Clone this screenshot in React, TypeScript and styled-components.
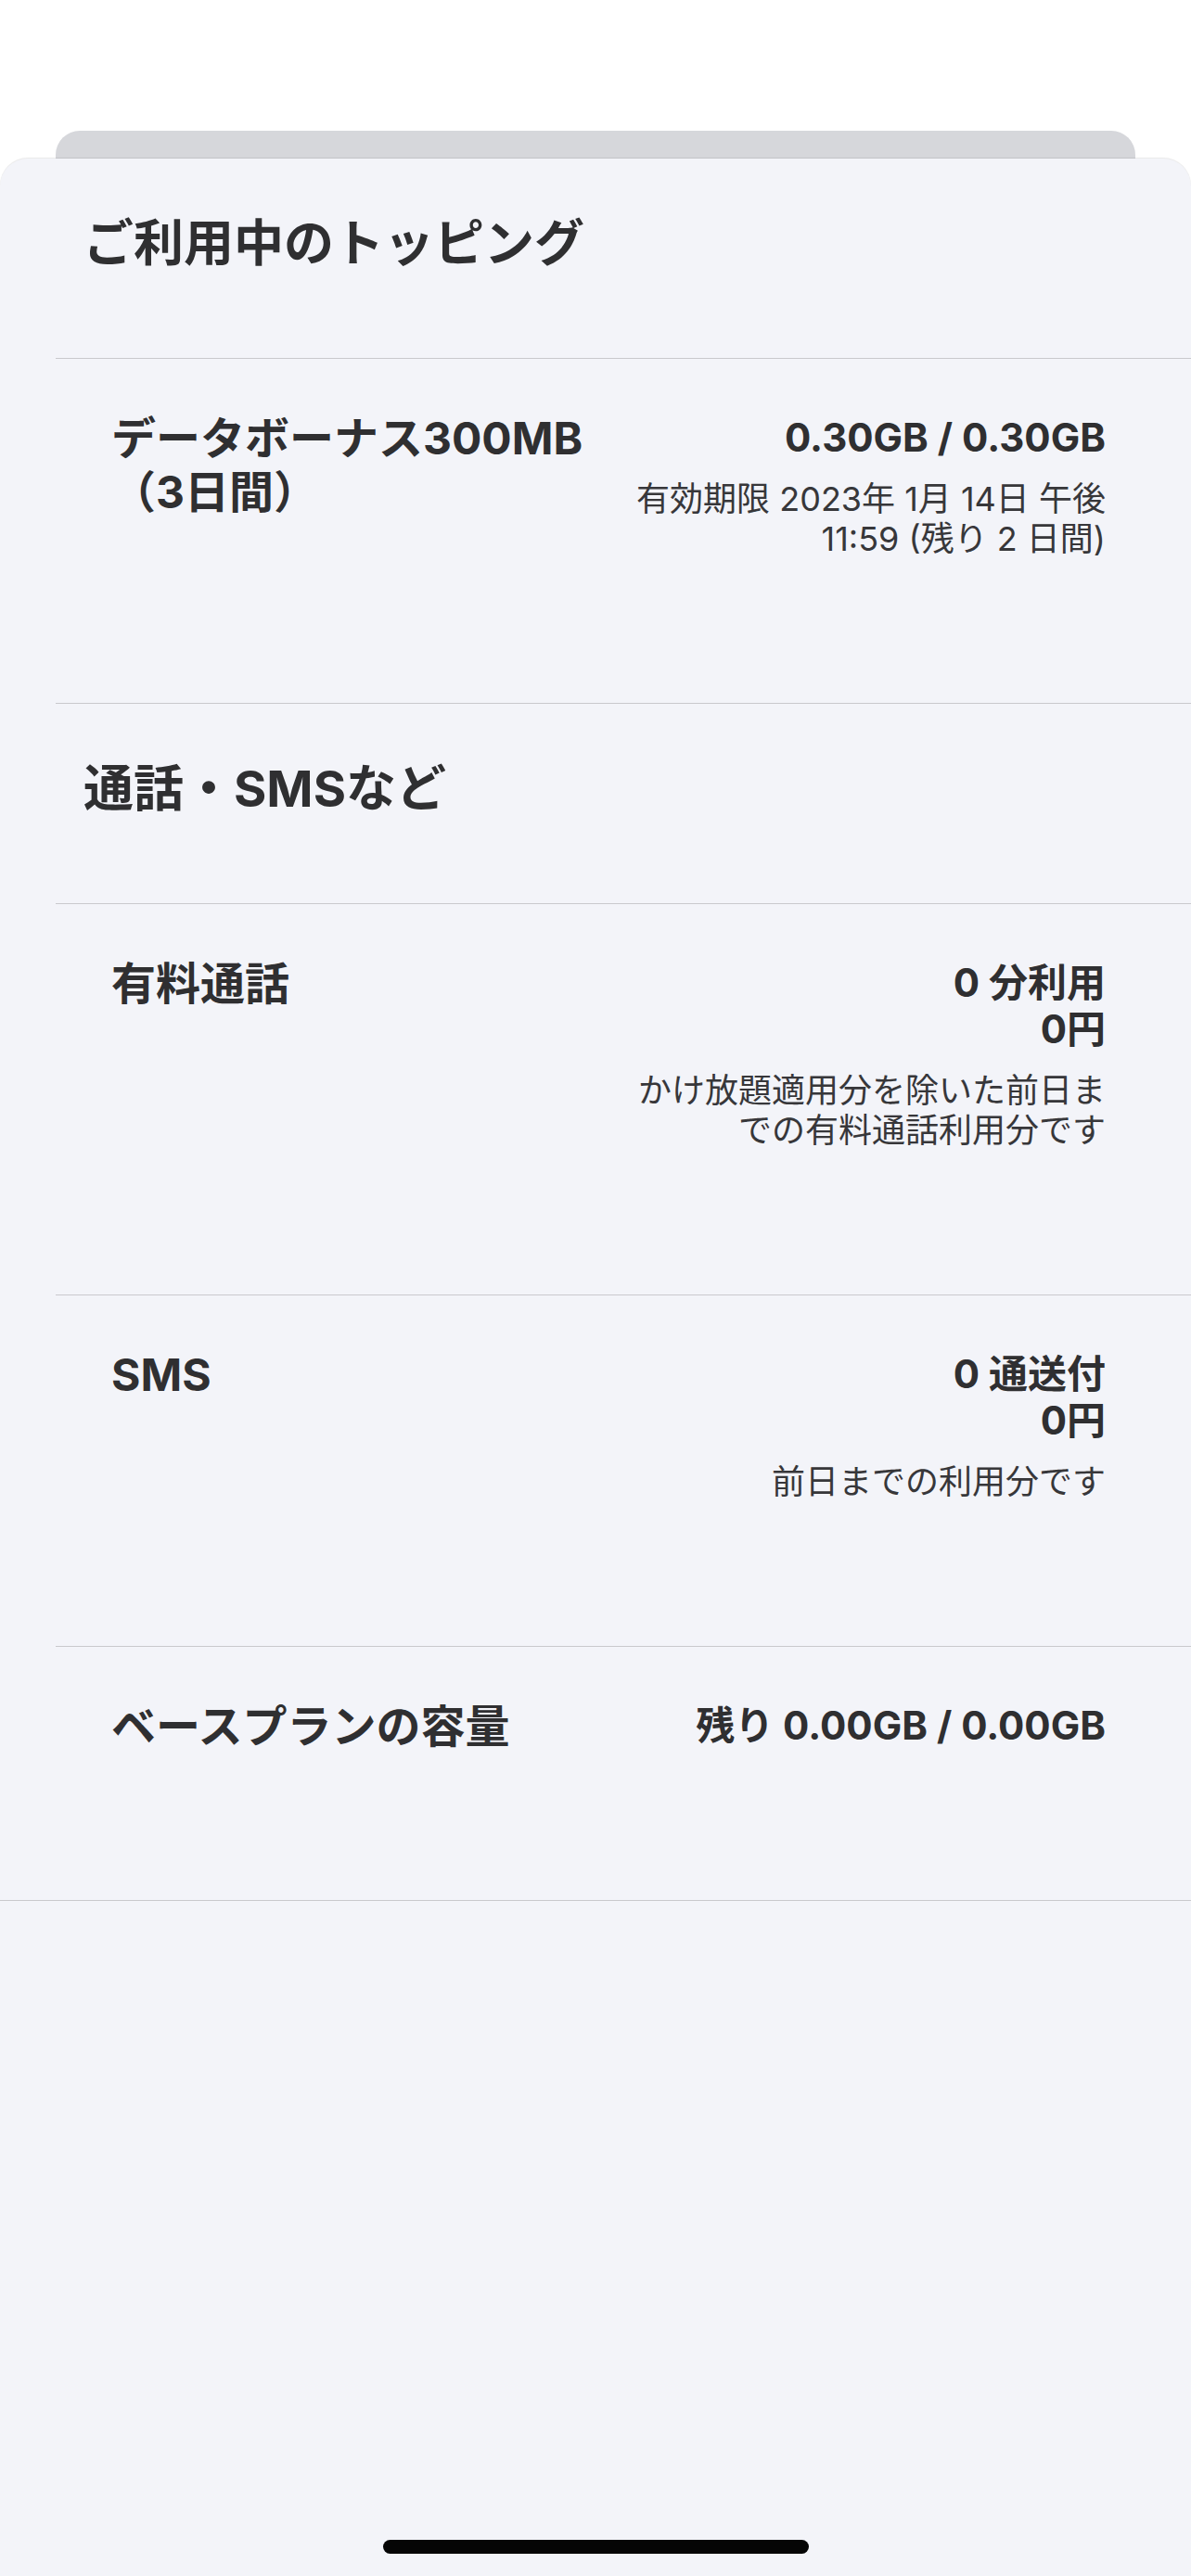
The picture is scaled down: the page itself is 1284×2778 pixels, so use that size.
import React from "react";
import styled, { createGlobalStyle } from "styled-components";

const GlobalStyle = createGlobalStyle`
  html, body {
    margin: 0;
    padding: 0;
    background: #ffffff;
  }
  body {
    font-family: Inter, "Noto Sans CJK JP", "Noto Sans", sans-serif;
    color: #2e2e30;
    -webkit-font-smoothing: antialiased;
  }
  * { box-sizing: border-box; }
`;

const Screen = styled.div`
  width: 1284px;
  min-height: 2778px;
  padding-top: 141px;
  display: flex;
  flex-direction: column;
  background: #ffffff;
`;

const BackTab = styled.div`
  height: 30px;
  margin: 0 60px;
  background: #d6d7db;
  border-radius: 26px 26px 0 0;
`;

const Sheet = styled.div`
  flex: 1;
  display: flex;
  flex-direction: column;
  background: #f3f4f9;
  border-radius: 30px 30px 0 0;
  box-shadow: 0 -1px 1px rgba(0, 0, 0, 0.09);
`;

const List = styled.div`
  display: flex;
  flex-direction: column;
  padding-left: 60px;
  border-bottom: 1px solid #c9c9cd;
`;

const SectionHeader = styled.div<{ $divided?: boolean }>`
  padding: 60px 0 91px 30px;
  border-top: ${(p) => (p.$divided ? "1px solid #c9c9cd" : "none")};
`;

const SectionTitle = styled.h2`
  margin: 0;
  font-size: 54px;
  line-height: 64px;
  font-weight: 700;
  color: #2f2f31;
`;

const Row = styled.div`
  display: flex;
  justify-content: space-between;
  align-items: flex-start;
  gap: 40px;
  padding: 60px 92px 155px 60px;
  border-top: 1px solid #c9c9cd;
`;

const Label = styled.div`
  font-size: 48px;
  line-height: 58px;
  margin: -3px 0 3px;
  font-weight: 700;
  color: #2f2f31;
  white-space: nowrap;
`;

const ValueColumn = styled.div`
  display: flex;
  flex-direction: column;
  align-items: flex-end;
  text-align: right;
`;

const Value = styled.div`
  font-size: 42px;
  line-height: 50px;
  font-weight: 700;
  color: #2f2f31;
  white-space: nowrap;
`;

const Note = styled.div`
  margin-top: 20px;
  font-size: 36px;
  line-height: 43px;
  font-weight: 400;
  color: #37373a;
  white-space: nowrap;
`;

const HomeIndicator = styled.div`
  margin: auto auto 24px;
  width: 459px;
  height: 15px;
  border-radius: 8px;
  background: #050505;
`;

type Item = {
  label: React.ReactNode;
  values: string[];
  note?: React.ReactNode;
};

const toppings: Item[] = [
  {
    label: (
      <>
        データボーナス300MB
        <br />
        （3日間）
      </>
    ),
    values: ["0.30GB / 0.30GB"],
    note: (
      <>
        有効期限 2023年 1月 14日 午後
        <br />
        11:59 (残り 2 日間)
      </>
    ),
  },
];

const calls: Item[] = [
  {
    label: "有料通話",
    values: ["0 分利用", "0円"],
    note: (
      <>
        かけ放題適用分を除いた前日ま
        <br />
        での有料通話利用分です
      </>
    ),
  },
  {
    label: "SMS",
    values: ["0 通送付", "0円"],
    note: "前日までの利用分です",
  },
  {
    label: "ベースプランの容量",
    values: ["残り 0.00GB / 0.00GB"],
  },
];

const ItemRow: React.FC<{ item: Item }> = ({ item }) => (
  <Row>
    <Label>{item.label}</Label>
    <ValueColumn>
      {item.values.map((v) => (
        <Value key={v}>{v}</Value>
      ))}
      {item.note && <Note>{item.note}</Note>}
    </ValueColumn>
  </Row>
);

export default function App() {
  return (
    <>
      <GlobalStyle />
      <Screen>
        <BackTab />
        <Sheet>
          <List>
            <SectionHeader>
              <SectionTitle>ご利用中のトッピング</SectionTitle>
            </SectionHeader>
            {toppings.map((it, i) => (
              <ItemRow key={i} item={it} />
            ))}
            <SectionHeader $divided>
              <SectionTitle>通話・SMSなど</SectionTitle>
            </SectionHeader>
            {calls.map((it, i) => (
              <ItemRow key={i} item={it} />
            ))}
          </List>
          <HomeIndicator />
        </Sheet>
      </Screen>
    </>
  );
}
